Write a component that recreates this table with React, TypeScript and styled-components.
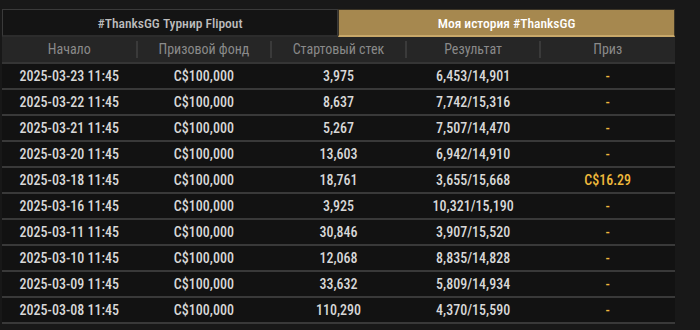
import React from "react";
import styled, { createGlobalStyle } from "styled-components";

const Global = createGlobalStyle`
  html, body { margin: 0; padding: 0; background: #181818; }
  body { font-family: "Roboto Condensed", Roboto, "Liberation Sans", sans-serif; }
`;

const Page = styled.div`
  padding: 9px 0 0 2px;
  width: 673px;
`;

const Tabs = styled.div`
  display: grid;
  grid-template-columns: 336px 337px;
  height: 28px;
`;

const Tab = styled.div<{ $active?: boolean }>`
  display: flex;
  align-items: center;
  justify-content: center;
  box-sizing: border-box;
  padding-top: 1px;
  font-size: 13.5px;
  font-weight: 500;
  color: ${(p) => (p.$active ? "#ffffff" : "#bdbdbd")};
  background: ${(p) => (p.$active ? "#a6884f" : "#141414")};
  border: 1px solid ${(p) => (p.$active ? "#3a3325" : "#3a3a3a")};
  border-bottom: 2px solid ${(p) => (p.$active ? "#c8a86a" : "#2c2c2c")};
`;

const Grid = styled.div`
  display: grid;
  grid-template-columns: repeat(5, 1fr);
  align-items: center;
`;

const HeaderRow = styled(Grid)`
  height: 25px;
  background: #262626;
  border-bottom: 2px solid #353535;
`;

const HeadCell = styled.div<{ $sep?: boolean }>`
  position: relative;
  text-align: center;
  font-size: 14px;
  color: #8a8a8a;
  line-height: 25px;
  &::before {
    content: "";
    display: ${(p) => (p.$sep ? "block" : "none")};
    position: absolute;
    left: -1px;
    top: 4px;
    width: 2px;
    height: 17px;
    background: #3a3a3a;
  }
`;

const Row = styled(Grid)`
  height: 24px;
  background: #121212;
  border-bottom: 2px solid #393939;
`;

const Cell = styled.div<{ $gold?: boolean }>`
  text-align: center;
  font-size: 14px;
  font-weight: 500;
  color: ${(p) => (p.$gold ? "#f0b93c" : "#d8d8d8")};
  line-height: 24px;
`;

const rows = [
  ["2025-03-23 11:45", "3,975", "6,453/14,901", "-"],
  ["2025-03-22 11:45", "8,637", "7,742/15,316", "-"],
  ["2025-03-21 11:45", "5,267", "7,507/14,470", "-"],
  ["2025-03-20 11:45", "13,603", "6,942/14,910", "-"],
  ["2025-03-18 11:45", "18,761", "3,655/15,668", "C$16.29"],
  ["2025-03-16 11:45", "3,925", "10,321/15,190", "-"],
  ["2025-03-11 11:45", "30,846", "3,907/15,520", "-"],
  ["2025-03-10 11:45", "12,068", "8,835/14,828", "-"],
  ["2025-03-09 11:45", "33,632", "5,809/14,934", "-"],
  ["2025-03-08 11:45", "110,290", "4,370/15,590", "-"],
];

const heads = ["Начало", "Призовой фонд", "Стартовый стек", "Результат", "Приз"];

export default function App() {
  return (
    <>
      <Global />
      <Page>
        <Tabs>
          <Tab>#ThanksGG Турнир Flipout</Tab>
          <Tab $active>Моя история #ThanksGG</Tab>
        </Tabs>
        <HeaderRow>
          {heads.map((h, i) => (
            <HeadCell key={h} $sep={i > 0}>
              {h}
            </HeadCell>
          ))}
        </HeaderRow>
        {rows.map((r) => (
          <Row key={r[0]}>
            <Cell>{r[0]}</Cell>
            <Cell>C$100,000</Cell>
            <Cell>{r[1]}</Cell>
            <Cell>{r[2]}</Cell>
            <Cell $gold>{r[3]}</Cell>
          </Row>
        ))}
      </Page>
    </>
  );
}
